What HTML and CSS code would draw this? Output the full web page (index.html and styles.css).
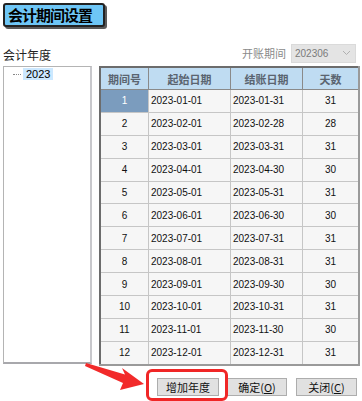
FILE: index.html
```html
<!DOCTYPE html>
<html lang="zh">
<head>
  <meta charset="UTF-8">
  <title>会计期间设置</title>
  <link rel="stylesheet" href="styles.css">
</head>
<body>
  <div class="title">会计期间设置</div>

  <div class="main">
    <div class="left">
      <div class="label">会计年度</div>
      <div class="tree">
        <span class="dots"></span><span class="node">2023</span>
      </div>
    </div>

    <div class="right">
      <div class="period">
        <span class="period-label">开账期间</span>
        <div class="select">
          <span>202306</span>
          <svg width="9" height="6" viewBox="0 0 9 6"><path d="M1 1 L4.5 4.5 L8 1" fill="none" stroke="#b0b0b0" stroke-width="1"/></svg>
        </div>
      </div>

      <table class="grid">
        <thead>
          <tr><th class="c-no">期间号</th><th class="c-date">起始日期</th><th class="c-end">结账日期</th><th class="c-days">天数</th></tr>
        </thead>
        <tbody>
          <tr><td class="num selected">1</td><td>2023-01-01</td><td>2023-01-31</td><td class="num">31</td></tr>
          <tr><td class="num">2</td><td>2023-02-01</td><td>2023-02-28</td><td class="num">28</td></tr>
          <tr><td class="num">3</td><td>2023-03-01</td><td>2023-03-31</td><td class="num">31</td></tr>
          <tr><td class="num">4</td><td>2023-04-01</td><td>2023-04-30</td><td class="num">30</td></tr>
          <tr><td class="num">5</td><td>2023-05-01</td><td>2023-05-31</td><td class="num">31</td></tr>
          <tr><td class="num">6</td><td>2023-06-01</td><td>2023-06-30</td><td class="num">30</td></tr>
          <tr><td class="num">7</td><td>2023-07-01</td><td>2023-07-31</td><td class="num">31</td></tr>
          <tr><td class="num">8</td><td>2023-08-01</td><td>2023-08-31</td><td class="num">31</td></tr>
          <tr><td class="num">9</td><td>2023-09-01</td><td>2023-09-30</td><td class="num">30</td></tr>
          <tr><td class="num">10</td><td>2023-10-01</td><td>2023-10-31</td><td class="num">31</td></tr>
          <tr><td class="num">11</td><td>2023-11-01</td><td>2023-11-30</td><td class="num">30</td></tr>
          <tr><td class="num">12</td><td>2023-12-01</td><td>2023-12-31</td><td class="num">31</td></tr>
        </tbody>
      </table>
    </div>
  </div>

  <div class="buttons">
    <button class="btn btn-add">增加年度</button>
    <button class="btn btn-ok">确定(<u>O</u>)</button>
    <button class="btn btn-close">关闭(<u>C</u>)</button>
  </div>

  <!-- annotation over the screenshot -->
  <div class="highlight"></div>
  <svg class="arrow" width="362" height="401" viewBox="0 0 362 401">
    <polygon points="86,363 125,374.5 122,368 144,384 120,390 123,383 85,366" fill="#f22a2a"/>
  </svg>
</body>
</html>
```

FILE: styles.css
```css
body {
  margin: 0;
  background-color: #ffffff;
  font-family: "Liberation Sans", "Noto Sans CJK SC", sans-serif;
  color: #000;
  position: relative;
  width: 362px;
  height: 401px;
  overflow: hidden;
}

.title {
  box-sizing: border-box;
  width: 102px;
  height: 24px;
  margin: 3px 0 0 3px;
  line-height: 20px;
  padding: 0 0 0 3px;
  background-color: #6ec6f6;
  border: 2px solid #222;
  border-radius: 3px;
  box-shadow: 2px 2px 0 #5a5a5a;
  font-family: "Noto Sans CJK SC", sans-serif;
  font-size: 15px;
  font-weight: 700;
  letter-spacing: -1px;
  white-space: nowrap;
  overflow: hidden;
}

.main {
  display: flex;
  gap: 7px;
  margin-top: 16px;
  padding-left: 3px;
}

.left {
  width: 89px;
}

.label {
  height: 20px;
  line-height: 20px;
  padding-top: 2px;
  margin-bottom: 1px;
  font-family: "Noto Sans CJK SC", sans-serif;
  font-size: 12px;
  color: #222;
}

.tree {
  height: 294px;
  border: 1px solid #b4b4b4;
  border-bottom: 2px solid #a8a8ac;
  border-right: 2px solid #c8c8cc;
  display: flex;
  align-items: flex-start;
  padding-top: 1px;
}

.dots {
  width: 8px;
  margin: 6px 2px 0 9px;
  border-top: 1px dotted #888;
}

.node {
  background-color: #cce8ff;
  font-size: 11px;
  line-height: 12px;
  padding: 0 3px;
}

.right {
  width: 261px;
}

.period {
  display: flex;
  justify-content: flex-end;
  align-items: center;
  gap: 5px;
  height: 20px;
  margin-bottom: 3px;
  padding-right: 4px;
}

.period-label {
  font-family: "Noto Sans CJK SC", sans-serif;
  font-size: 11px;
  color: #8a8a8a;
}

.select {
  width: 65px;
  height: 19px;
  background-color: #e4e4e4;
  border: 1px solid #dadada;
  display: flex;
  justify-content: space-between;
  align-items: center;
  padding: 0 4px 0 3px;
  box-sizing: border-box;
  font-size: 10px;
  color: #7a7a7a;
}

.grid {
  border-collapse: collapse;
  width: 261px;
  table-layout: fixed;
  border-left: 2px solid #6c6c6c;
  border-top: 2px solid #6c6c6c;
  border-right: 2px solid #9a9a9a;
  border-bottom: 2px solid #9a9a9a;
  font-size: 10px;
}

.grid th,
.grid td {
  border: 1px solid #c6c6c6;
  padding: 0 2px;
  overflow: hidden;
  white-space: nowrap;
}

.grid th {
  height: 21px;
  background-color: #bfdcf2;
  border-color: #8a8a8a;
  font-family: "Noto Sans CJK SC", sans-serif;
  font-size: 11px;
  font-weight: 700;
  color: #5a6470;
}

.grid td {
  height: 21.9px;
  background-color: #f6f6f6;
  color: #111;
}

.c-no { width: 43px; }
.c-date { width: 77px; }
.c-end { width: 67px; }

.grid td.num {
  text-align: center;
}

.grid td.selected {
  background-color: #7b9cbe;
  color: #fff;
}

.buttons {
  display: flex;
  justify-content: flex-end;
  gap: 8px;
  margin-top: 12px;
  padding-right: 5px;
}

.btn {
  height: 18px;
  padding: 0;
  background-color: #e1e1e1;
  border: 1px solid #adadad;
  border-radius: 0;
  font-family: "Noto Sans CJK SC", sans-serif;
  font-size: 11px;
  color: #111;
  line-height: 16px;
}

.btn-add { width: 62px; }
.btn-ok { width: 60px; }
.btn-close { width: 61px; margin-left: 1px; }

.highlight {
  position: absolute;
  left: 146px;
  top: 369px;
  width: 76px;
  height: 26px;
  border: 3px solid #f02626;
  border-radius: 6px;
}

.arrow {
  position: absolute;
  left: 0;
  top: 0;
}
```
